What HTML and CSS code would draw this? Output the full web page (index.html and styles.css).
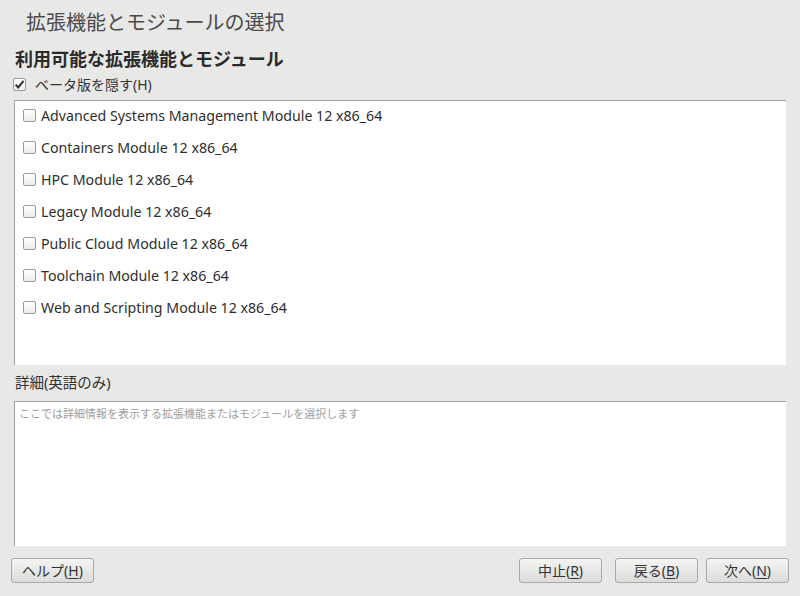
FILE: index.html
```html
<!DOCTYPE html>
<html lang="ja">
<head>
<meta charset="utf-8">
<link rel="stylesheet" href="styles.css">
</head>
<body>
<div class="page">
  <h1 class="title">拡張機能とモジュールの選択</h1>
  <h2 class="heading">利用可能な拡張機能とモジュール</h2>
  <label class="hide-beta">
    <span class="cb checked">
      <svg viewBox="0 0 13 13" width="13" height="13"><path d="M2.6 6.6 L5.2 9.4 L10.6 2.8" fill="none" stroke="#333" stroke-width="2"/></svg>
    </span>
    <span>ベータ版を隠す(H)</span>
  </label>
  <div class="list">
    <div class="item"><span class="cb"></span><span>Advanced Systems Management Module 12 x86_64</span></div>
    <div class="item"><span class="cb"></span><span>Containers Module 12 x86_64</span></div>
    <div class="item"><span class="cb"></span><span>HPC Module 12 x86_64</span></div>
    <div class="item"><span class="cb"></span><span>Legacy Module 12 x86_64</span></div>
    <div class="item"><span class="cb"></span><span>Public Cloud Module 12 x86_64</span></div>
    <div class="item"><span class="cb"></span><span>Toolchain Module 12 x86_64</span></div>
    <div class="item"><span class="cb"></span><span>Web and Scripting Module 12 x86_64</span></div>
  </div>
  <div class="details-label">詳細(英語のみ)</div>
  <div class="details">ここでは詳細情報を表示する拡張機能またはモジュールを選択します</div>
  <div class="buttons">
    <button class="btn">ヘルプ(<u>H</u>)</button>
    <div class="spacer"></div>
    <button class="btn">中止(<u>R</u>)</button>
    <button class="btn gap-l">戻る(<u>B</u>)</button>
    <button class="btn gap-s">次へ(<u>N</u>)</button>
  </div>
</div>
</body>
</html>
```
FILE: styles.css
```css
html, body {
  margin: 0;
  padding: 0;
  background: #e8e8e7;
}
body {
  width: 800px;
  height: 596px;
  overflow: hidden;
  font-family: "Noto Sans", "Noto Sans CJK JP", sans-serif;
  color: #2e2e2e;
}
.page {
  display: flex;
  flex-direction: column;
}
.title {
  margin: 0;
  padding: 9px 0 0 26px;
  height: 29px;
  font-size: 20px;
  font-weight: normal;
  line-height: 27px;
  color: #4a4a4a;
}
.heading {
  margin: 0;
  padding: 10px 0 0 15px;
  height: 32px;
  font-size: 18px;
  font-weight: bold;
  line-height: 22px;
  color: #2b2b2b;
  box-sizing: border-box;
}
.hide-beta {
  display: flex;
  align-items: center;
  gap: 9px;
  padding-left: 13px;
  height: 20px;
  margin-top: 4px;
  font-size: 14px;
  color: #333;
}
.cb {
  display: inline-block;
  width: 13px;
  height: 13px;
  box-sizing: border-box;
  border: 1px solid #9a9a9a;
  border-radius: 2px;
  background: linear-gradient(#ffffff, #ececec);
  flex: none;
}
.cb svg {
  display: block;
  margin: -1px;
}
.list {
  margin: 6px 0 0 14px;
  width: 772px;
  height: 265px;
  box-sizing: border-box;
  background: #fff;
  border-left: 1px solid #a3a3a3;
  border-top: 1px solid #a3a3a3;
  padding-top: 0;
}
.item {
  display: flex;
  align-items: center;
  gap: 5px;
  height: 32px;
  box-sizing: border-box;
  padding: 0 0 3px 8px;
  font-size: 14.2px;
  color: #2e2e2e;
}
.details-label {
  height: 36px;
  padding-left: 15px;
  font-size: 14.5px;
  line-height: 35px;
  color: #333;
}
.details {
  margin-left: 14px;
  width: 772px;
  height: 145px;
  box-sizing: border-box;
  background: #fff;
  border-left: 1px solid #a3a3a3;
  border-top: 1px solid #a3a3a3;
  padding: 4px 0 0 4px;
  font-size: 11px;
  line-height: 16px;
  color: #a0a0a0;
}
.buttons {
  display: flex;
  margin-top: 12px;
  padding: 0 11px;
}
.spacer {
  flex: 1;
}
.btn {
  width: 83px;
  height: 25px;
  box-sizing: border-box;
  border: 1px solid #a8a8a8;
  border-radius: 3px;
  background: linear-gradient(#f4f4f3, #dcdcdb);
  font-family: "Noto Sans", "Noto Sans CJK JP", sans-serif;
  font-size: 14px;
  color: #333;
  padding: 0;
  line-height: 22px;
}
.btn u {
  text-underline-offset: 2px;
}
.gap-l {
  margin-left: 13px;
}
.gap-s {
  margin-left: 8px;
}
```
